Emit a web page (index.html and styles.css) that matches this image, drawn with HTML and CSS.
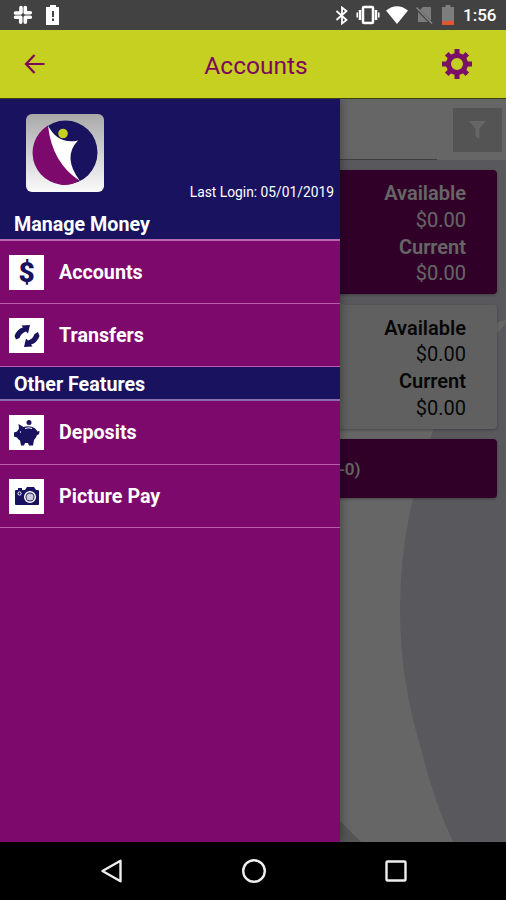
FILE: index.html
```html
<!DOCTYPE html>
<html lang="en">
<head>
  <meta charset="UTF-8">
  <meta name="viewport" content="width=device-width, initial-scale=1.0">
  <title>Accounts</title>
  <link rel="stylesheet" href="styles.css">
</head>
<body>
  <div class="phone">
    <!-- Status bar -->
    <div class="status-bar">
      <svg class="slack" width="20" height="20" viewBox="0 0 20 20" stroke="#fff" stroke-width="3.6" stroke-linecap="round">
        <path d="M8 2.5v5M2.5 8h5M12.3 2.5v5M12.3 7.8h5M7.7 12.3v5M2.5 12.3h5M12.3 12.3v5M12.3 12.3h5"/>
      </svg>
      <svg class="alert" width="14" height="20" viewBox="0 0 14 20">
        <path d="M4 0h6v2h3v18H0V2h4z" fill="#fff"/>
        <path d="M7 6v6M7 13.5v2.5" stroke="#444" stroke-width="2"/>
      </svg>
      <div class="status-right">
        <svg width="14" height="19" viewBox="0 0 14 19" fill="none" stroke="#fff" stroke-width="1.8">
          <path d="M1.5 5l10 9L7 17.5v-16l4.500 3.500-10 9"/>
        </svg>
        <svg class="vibrate" width="24" height="20" viewBox="0 0 24 20" fill="none" stroke="#fff">
          <rect x="7" y="2" width="10" height="16" rx="1" stroke-width="2.500"/>
          <path d="M4 5v10M20 5v10" stroke-width="2.500"/>
          <path d="M1.200 7.500v5M22.800 7.500v5" stroke-width="1.500"/>
        </svg>
        <svg class="wifi" width="22" height="18" viewBox="0 0 22 18">
          <path d="M0 4.500Q11-4 22 4.500L11 18z" fill="#fff"/>
        </svg>
        <svg class="sim" width="17" height="18" viewBox="0 0 17 18">
          <path d="M7 1h8v15H2V6z" fill="#7c7c7c"/>
          <path d="M0 2l16 16" stroke="#424242" stroke-width="3"/>
          <path d="M.5 1.500l15.500 16" stroke="#858585" stroke-width="1.500"/>
        </svg>
        <svg class="battery" width="12" height="20" viewBox="0 0 12 20">
          <path d="M3.500 0h5v2H12v14H0V2h3.500z" fill="#7d7d7d"/>
          <path d="M0 16h12v4H0z" fill="#e2552e"/>
        </svg>
        <span class="clock">1:56</span>
      </div>
    </div>

    <!-- Header -->
    <header class="header">
      <svg width="22" height="20" viewBox="0 0 22 20" fill="none" stroke="#7b0a5c" stroke-width="2.200">
        <path d="M10.500 1L2 10l8.500 9M2 10h18.500"/>
      </svg>
      <h1>Accounts</h1>
      <svg width="30" height="30" viewBox="-15 -15 30 30">
        <circle r="8.500" fill="none" stroke="#7b1068" stroke-width="5"/>
        <path d="M0-15v5M0 10v5M-15 0h5M10 0h5M-10.300-10.300l3.500 3.500M6.800 6.800l3.500 3.500M10.300-10.300L6.800-6.800M-6.800 6.800l-3.500 3.500" stroke="#7b1068" stroke-width="5"/>
      </svg>
    </header>

    <main class="page">
      <!-- Logo shape behind the account cards -->
      <svg class="backdrop" width="506" height="743" viewBox="0 0 506 743">
        <rect width="506" height="743" fill="#dedee8"/>
        <path d="M200 60C270 200 400 250 506 221V222Q502 232 492 237Q452 280 433 331Q373 497 422 653Q433 700 453 743H361Q270 660 200 530z" fill="#fff"/>
        <path d="M340 722l21 21h-21z" fill="#d4d4d8"/>
      </svg>

      <div class="content">
        <div class="search">
          <div class="search-line"></div>
          <div class="filter">
            <svg width="17" height="18" viewBox="0 0 18 19"><path d="M0 0h18l-7 8v11l-4-3V8z" fill="#fff"/></svg>
          </div>
        </div>
        <div class="card purple">
          <b>Available</b>
          <span>$0.00</span>
          <b>Current</b>
          <span>$0.00</span>
        </div>
        <div class="card">
          <b>Available</b>
          <span>$0.00</span>
          <b>Current</b>
          <span>$0.00</span>
        </div>
        <div class="card purple loan">-0)</div>
      </div>

      <div class="scrim"></div>

      <!-- Side menu -->
      <nav class="drawer">
        <div class="profile">
          <svg class="logo" width="78" height="78" viewBox="0 0 78 78">
            <defs>
              <linearGradient id="tile" x1="0" y1="0" x2="0" y2="1">
                <stop offset="0" stop-color="#a9a9a9"/>
                <stop offset="1" stop-color="#fafafa"/>
              </linearGradient>
            </defs>
            <rect width="78" height="78" rx="6" fill="url(#tile)"/>
            <circle cx="39.500" cy="38.500" r="32" fill="#18125f"/>
            <path d="M22 11.500A32 32 0 0 0 46 70L53 67Q28 45 22 11.500z" fill="#7e096c"/>
            <path d="M22 11.500Q32 31 52 26.500Q36 43 54 67Q26 49 22 11.500z" fill="#fff"/>
            <circle cx="37" cy="19.500" r="4.800" fill="#c6d021"/>
          </svg>
          <p class="last-login">Last Login: 05/01/2019</p>
          <h2>Manage Money</h2>
        </div>
        <a class="item">
          <span class="icon dollar">$</span>
          Accounts
        </a>
        <a class="item">
          <span class="icon">
            <svg width="26" height="24" viewBox="0 0 26 24" fill="#18125f">
              <path d="M2 15.500L.5 12Q3 5 9 3.500L7.500 1.500 16 1l-2 8.500-2-2Q7 9 5.500 14z"/>
              <path d="M24 8L25.500 12Q23 19 17 20.500l1.500 2L10 23l2-8.500 2 2Q19 15 20.500 10z"/>
            </svg>
          </span>
          Transfers
        </a>
        <h2 class="section">Other Features</h2>
        <a class="item">
          <span class="icon">
            <svg width="26" height="26" viewBox="0 0 26 26" fill="#18125f">
              <circle cx="15" cy="2.500" r="2.500"/>
              <path d="M4.500 4l5 3q6-2 11 1 2.500 2 3 3.500l2-.5q0 4-2.500 4-1 3-3 5l-1 5.500h-4l-1-2.500h-3l-1 2.500H7l-1-5q-2-1-3-3l-3-1v-4l3-1 2-3z"/>
              <path d="M11 8.500q4-1.500 7 0" fill="none" stroke="#fff"/>
              <circle cx="6.500" cy="12" r=".7" fill="#fff"/>
            </svg>
          </span>
          Deposits
        </a>
        <a class="item">
          <span class="icon">
            <svg width="24" height="18" viewBox="0 0 24 18">
              <path d="M1 3h2V1h4v2h3l2-3h7l2 3h2q1 0 1 1v13q0 1-1 1H1q-1 0-1-1V4q0-1 1-1z" fill="#18125f"/>
              <circle cx="15" cy="10" r="5.300" fill="#18125f" stroke="#fff" stroke-width="1.500"/>
              <circle cx="15" cy="10" r="3.600" fill="#c9c9da"/>
              <circle cx="4.500" cy="6.500" r="1.600" fill="none" stroke="#fff"/>
            </svg>
          </span>
          Picture Pay
        </a>
      </nav>
    </main>

    <!-- Android navigation buttons -->
    <div class="nav-bar">
      <svg width="24" height="24" viewBox="0 0 24 24"><path d="M2.500 12L20.500 1.800v20.400z"/></svg>
      <svg width="24" height="24" viewBox="0 0 24 24"><circle cx="12" cy="12" r="10.800"/></svg>
      <svg width="24" height="24" viewBox="0 0 24 24"><rect x="2.500" y="2.500" width="19" height="19" rx="1"/></svg>
    </div>
  </div>
</body>
</html>
```

FILE: styles.css
```css
* {
  box-sizing: border-box;
}
body {
  margin: 0;
  font-family: Roboto, "Liberation Sans", sans-serif;
}
h1, h2, p {
  margin: 0;
}
svg {
  display: block;
}
.phone {
  display: flex;
  flex-direction: column;
  width: 506px;
  height: 900px;
  overflow: hidden;
}

/* Top bars */
.status-bar {
  display: flex;
  align-items: center;
  height: 30px;
  padding: 0 9px 0 13px;
  background: #424242;
}
.alert {
  margin-left: 13px;
}
.status-right {
  display: flex;
  align-items: center;
  margin-left: auto;
}
.vibrate {
  margin-left: 7px;
}
.wifi {
  margin-left: 6px;
}
.sim {
  margin-left: 8px;
}
.battery {
  margin-left: 9px;
}
.clock {
  width: 34px;
  margin-left: 9px;
  color: #fff;
  font-size: 17px;
  font-weight: 500;
  line-height: 32px;
  white-space: nowrap;
}
.header {
  display: flex;
  align-items: center;
  justify-content: space-between;
  height: 69px;
  padding: 0 34px 0 24px;
  background: #c6d021;
  border-bottom: 1px solid #3c4010;
}
.header h1 {
  color: #7b0a5c;
  font-size: 24.5px;
  font-weight: 400;
  padding: 3px 0 0 24px;
}

/* Accounts page */
.page {
  position: relative;
  height: 743px;
  overflow: hidden;
}
.backdrop, .content, .scrim, .drawer {
  position: absolute;
  top: 0;
  left: 0;
}
.content {
  width: 100%;
}
.scrim {
  width: 100%;
  height: 100%;
  background: rgba(0, 0, 0, 0.6);
}
.search {
  display: flex;
  justify-content: space-between;
  height: 61px;
  padding: 9px 4px 0 0;
  background: #fff;
}
.search-line {
  width: 437px;
  height: 52px;
  border-bottom: 1px solid #999;
}
.filter {
  display: flex;
  align-items: center;
  justify-content: center;
  width: 49px;
  height: 44px;
  background: #d2d2d2;
}
.card {
  display: flex;
  flex-direction: column;
  height: 124px;
  margin: 10.3px 9px 0;
  padding: 10px 31px 0 0;
  border-radius: 4px;
  background: #f1f1f1;
  box-shadow: 0 1px 3px rgba(0, 0, 0, 0.3);
  color: #111;
  font-size: 20px;
  line-height: 26.7px;
  text-align: right;
}
.card b {
  font-weight: 600;
}
.card span {
  font-weight: 400;
}
.card.purple {
  background: #7b0066;
  color: #fff;
}
.card.loan {
  display: block;
  height: 59px;
  padding: 17px 0 0 330px;
  font-size: 17px;
  font-weight: 500;
  text-align: left;
}

/* Side menu */
.drawer {
  width: 340px;
  height: 743px;
  background: #7e096c;
  box-shadow: 0 0 10px rgba(0, 0, 0, 0.4);
  color: #fff;
}
.profile {
  height: 142px;
  padding: 15px 6px 0 14px;
  background: #18125f;
  border-bottom: 2px solid #b568ac;
}
.logo {
  margin-left: 12px;
}
.last-login {
  font-size: 13.8px;
  line-height: 16px;
  margin-top: -8px;
  text-align: right;
}
.drawer h2 {
  font-size: 19.7px;
  font-weight: 700;
  line-height: 24px;
}
.profile h2 {
  margin-top: 13px;
}
.item {
  display: flex;
  align-items: center;
  height: 63.2px;
  padding: 1px 0 0 9px;
  border-bottom: 1px solid #b75cae;
  font-size: 19.7px;
  font-weight: 700;
}
.icon {
  display: flex;
  align-items: center;
  justify-content: center;
  width: 35px;
  height: 35px;
  margin-right: 15px;
  background: #fff;
}
.dollar {
  color: #18125f;
  font-size: 28px;
  font-weight: 900;
  line-height: 35px;
}
.drawer .section {
  height: 34px;
  padding: 6px 14px 0;
  background: #18125f;
  border-bottom: 2px solid #8d6bb0;
}

/* Bottom bar */
.nav-bar {
  display: flex;
  align-items: center;
  justify-content: space-between;
  height: 58px;
  padding: 0 98px 0 100px;
  background: #000;
}
.nav-bar svg {
  fill: none;
  stroke: #eee;
  stroke-width: 2.4;
  stroke-linejoin: round;
}
```
